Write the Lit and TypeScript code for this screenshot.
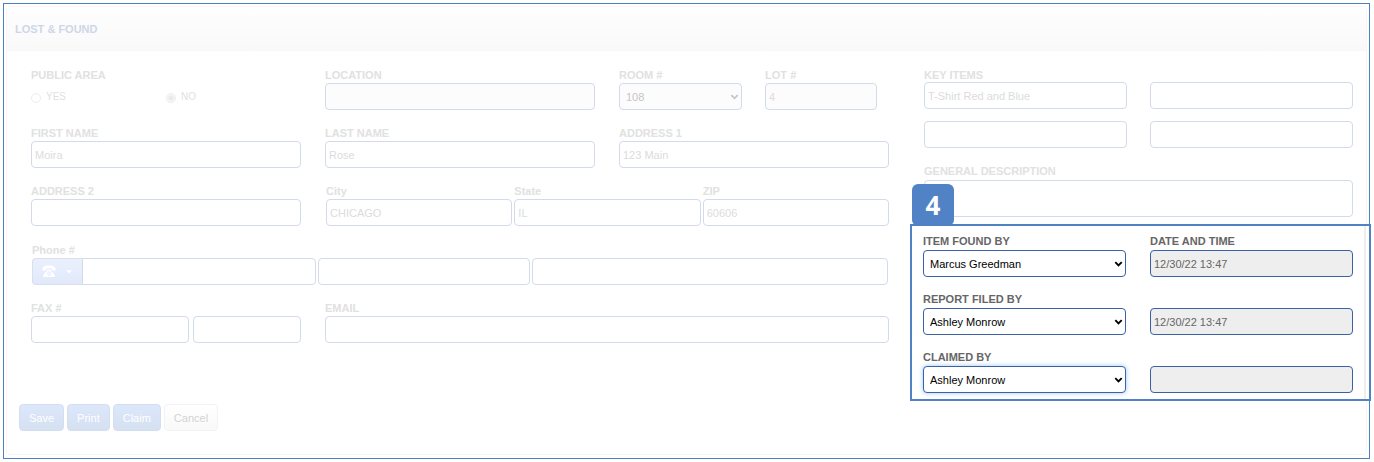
import { LitElement, html, css, nothing } from "lit";
import { customElement, property } from "lit/decorators.js";
import { classMap } from "lit/directives/class-map.js";

const controls = css`
  * { box-sizing: border-box; }
  .label {
    display: block;
    height: 14px;
    margin-bottom: 1px;
    font-size: 11px;
    font-weight: 700;
    line-height: 14px;
    color: #e1e1e1;
    white-space: nowrap;
  }
  .control {
    display: block;
    width: 100%;
    min-width: 0;
    height: 27px;
    margin: 0;
    padding: 0 3px;
    border: 1px solid #d3daea;
    border-radius: 4px;
    background-color: #fff;
    color: #dcdcdc;
    font-family: inherit;
    font-size: 11px;
    line-height: 16px;
    outline: none;
  }
  .control.shaded { background-color: #fcfcfc; }
  select.control {
    appearance: none;
    padding: 0 20px 0 6px;
    color: #c6c6c6;
    background-image: url("data:image/svg+xml,%3Csvg xmlns='http://www.w3.org/2000/svg' width='9' height='6'%3E%3Cpath d='M1.3 1.2l3.2 3.2 3.2-3.2' fill='none' stroke='%23c4c4c4' stroke-width='1.7'/%3E%3C/svg%3E");
    background-repeat: no-repeat;
    background-position: right 2px center;
  }
`;

@customElement("form-field")
class FormField extends LitElement {
  @property() label = "";
  @property() hint = "";
  @property() value = "";
  @property() kind = "text";
  @property({ type: Boolean }) shaded = false;
  @property({ type: Boolean }) active = false;
  @property({ type: Boolean }) glow = false;

  static styles = [
    controls,
    css`
      :host { display: block; min-width: 0; }
      .control.area { height: 37px; resize: none; }
      .label.active, .label.tall { margin-bottom: 2px; }
      .label.active { color: #666; }
      .control.active { border-color: #3a60a6; color: #666; }
      .control.active.shaded { background-color: #eee; }
      select.control.active {
        color: #000;
        background-image: url("data:image/svg+xml,%3Csvg xmlns='http://www.w3.org/2000/svg' width='9' height='6'%3E%3Cpath d='M1.3 1.2l3.2 3.2 3.2-3.2' fill='none' stroke='%23000' stroke-width='1.9'/%3E%3C/svg%3E");
      }
      .control.glow { box-shadow: 0 0 5px #9cc4f0; }
    `,
  ];

  render() {
    const area = this.kind === "area";
    const state = { active: this.active, shaded: this.shaded, glow: this.glow };
    const cls = classMap({ control: true, area, ...state });
    const aria = this.label ? nothing : this.hint;
    return html`
      ${this.label
        ? html`<label class=${classMap({ label: true, active: this.active, tall: area })} for="c">${this.label}</label>`
        : nothing}
      ${this.kind === "select"
        ? html`<select id="c" class=${cls} aria-label=${aria}><option>${this.value}</option></select>`
        : area
          ? html`<textarea id="c" class=${cls} aria-label=${aria}></textarea>`
          : html`<input id="c" type="text" class=${cls} aria-label=${aria} .value=${this.value} />`}
    `;
  }
}

@customElement("app-root")
class AppRoot extends LitElement {
  static styles = [
    controls,
    css`
      :host {
        display: block;
        padding: 3px 4px 3px 3px;
        background: #fff;
        font-family: "Liberation Sans", Arial, Helvetica, sans-serif;
      }
      .frame { padding: 2px 2px 3px; border: 1px solid #4b80c3; }
      .panel { border: 1px solid #f6f6f6; border-radius: 4px; }
      .head {
        display: flex;
        align-items: center;
        height: 44px;
        padding: 0 8px;
        border-bottom: 1px solid #f7f7f7;
        background: linear-gradient(#fefefe, #f9f9f9);
      }
      .title { margin: 0; font-size: 11px; line-height: 14px; color: #ced7e8; }
      .body {
        display: grid;
        grid-template-columns: 2fr 1fr;
        column-gap: 35px;
        align-items: start;
        padding: 17px 13px 0 24px;
      }
      .guest {
        display: grid;
        grid-template-columns: repeat(3, minmax(0, 1fr));
        gap: 16px 24px;
      }
      .wide { grid-column: span 2; }
      .full { grid-column: 1 / -1; }
      .radios { margin: 0; padding: 0; border: 0; }
      .radios .label { padding: 0; }
      .choices { display: grid; grid-template-columns: 1fr 1fr; padding-top: 7px; }
      .choice {
        display: flex;
        gap: 5px;
        font-size: 10px;
        line-height: 14px;
        color: #dfdfdf;
      }
      .radio {
        appearance: none;
        width: 10px;
        height: 10px;
        margin: 3px 0 0;
        border: 1px solid #ededed;
        border-radius: 50%;
        background: #fff;
      }
      .radio:checked { background: radial-gradient(circle, #ebebeb 2px, #fcfcfc 4px); }
      .room { display: grid; grid-template-columns: 11fr 10fr; gap: 23px; padding-right: 12px; }
      .place {
        display: grid;
        grid-template-columns: repeat(3, minmax(0, 1fr));
        gap: 2px;
        padding-left: 1px;
      }
      .phone { padding: 1px 1px 0; }
      .phone-row { display: grid; grid-template-columns: 284fr 213fr 356fr; gap: 2px; }
      .dial { display: flex; }
      .dial-button {
        display: flex;
        flex: none;
        align-items: center;
        gap: 10px;
        width: 50px;
        height: 27px;
        padding: 0 9px;
        border: 1px solid #d9dfec;
        border-right: 0;
        border-radius: 4px 0 0 4px;
        background: linear-gradient(#eaf0fd, #e1e9fa);
      }
      .dial .control { border-radius: 0 4px 4px 0; }
      .fax { display: grid; grid-template-columns: 158fr 108fr; gap: 4px; }
      .right .label { margin-bottom: 0; }
      .keys {
        display: grid;
        grid-template-columns: repeat(2, minmax(0, 1fr));
        align-items: end;
        gap: 12px 23px;
        margin-bottom: 16px;
      }
      .marked {
        position: relative;
        display: grid;
        grid-template-columns: repeat(2, minmax(0, 1fr));
        align-items: end;
        gap: 15px 24px;
        margin: 7px -18px 0 -14px;
        padding: 8px 16px 6px 11px;
        border: 2px solid #5182c6;
        background: linear-gradient(#eee, #eee) right 3px top / 2px 100% no-repeat #fff;
      }
      .badge {
        position: absolute;
        top: -42px;
        left: 0;
        width: 42px;
        height: 42px;
        border-radius: 6px;
        background: #5182c6;
        color: #fff;
        font-family: "Open Sans", sans-serif;
        font-size: 26px;
        font-weight: 700;
        line-height: 42px;
        text-align: center;
      }
      .actions { display: flex; gap: 3px; padding: 3px 12px 23px; }
      .button {
        height: 27px;
        padding: 0 9px;
        border: 1px solid #d3dff0;
        border-radius: 4px;
        background: linear-gradient(#dce7fb, #d5e0f1);
        color: #fff;
        font-family: inherit;
        font-size: 11px;
        line-height: 16px;
      }
      .button.plain {
        border-color: #f3f3f3;
        background: linear-gradient(#fff, #f9f9f9);
        color: #d3d3d3;
      }
    `,
  ];

  render() {
    return html`
      <main class="frame">
        <form class="panel" @submit=${(e: Event) => e.preventDefault()}>
          <header class="head"><h1 class="title">LOST &amp; FOUND</h1></header>
          <div class="body">
            <section class="guest">
              <fieldset class="radios">
                <legend class="label">PUBLIC AREA</legend>
                <div class="choices">
                  <label class="choice"><input class="radio" type="radio" name="public" />YES</label>
                  <label class="choice"><input class="radio" type="radio" name="public" checked />NO</label>
                </div>
              </fieldset>
              <form-field label="LOCATION" shaded></form-field>
              <div class="room">
                <form-field label="ROOM #" kind="select" value="108" shaded></form-field>
                <form-field label="LOT #" value="4" shaded></form-field>
              </div>
              <form-field label="FIRST NAME" value="Moira"></form-field>
              <form-field label="LAST NAME" value="Rose"></form-field>
              <form-field label="ADDRESS 1" value="123 Main"></form-field>
              <form-field label="ADDRESS 2"></form-field>
              <div class="place wide">
                <form-field label="City" value="CHICAGO"></form-field>
                <form-field label="State" value="IL"></form-field>
                <form-field label="ZIP" value="60606"></form-field>
              </div>
              <div class="phone full">
                <label class="label" for="phone">Phone #</label>
                <div class="phone-row">
                  <div class="dial">
                    <button class="dial-button" type="button" aria-label="Phone type">
                      <svg width="14" height="13" viewBox="0 0 14 13" fill="#fff">
                        <path d="M.3 4.7C.3 1.8 3 .6 7 .6s6.700 1.200 6.700 4.100c0 .6-.3.9-.9.900h-2c-.6 0-.9-.3-.9-.9v-.9C8.700 3.300 5.300 3.300 4.100 3.800v.9c0 .6-.3.9-.9.900h-2C.6 5.600.3 5.300.3 4.700z" />
                        <path fill-rule="evenodd" d="M5 4.800h4v1l3.200 3.400c.3.400.5.800.5 1.300v1.600H1.300v-1.600c0-.5.2-.9.500-1.300L5 5.800zM7 6.300a2.300 2.300 0 100 4.600 2.300 2.300 0 000-4.600z" />
                        <path d="M5.400 7.200h1v1h-1zM7.600 7.200h1v1h-1zM5.400 9h1v1h-1zM7.600 9h1v1h-1zM6.500 8.100h1v1h-1z" />
                      </svg>
                      <svg width="6" height="4" viewBox="0 0 6 4" fill="#fff"><path d="M0 .3h6L3 3.500z" /></svg>
                    </button>
                    <input id="phone" class="control" type="tel" />
                  </div>
                  <form-field hint="Phone, second part"></form-field>
                  <form-field hint="Phone, third part"></form-field>
                </div>
              </div>
              <div>
                <label class="label" for="fax">FAX #</label>
                <div class="fax">
                  <input id="fax" class="control" type="tel" />
                  <input class="control" type="tel" aria-label="Fax, second part" />
                </div>
              </div>
              <form-field class="wide" label="EMAIL"></form-field>
            </section>

            <section class="right">
              <label class="label" for="key">KEY ITEMS</label>
              <div class="keys">
                <input id="key" class="control" type="text" value="T-Shirt Red and Blue" />
                <form-field hint="Key item 2"></form-field>
                <form-field hint="Key item 3"></form-field>
                <form-field hint="Key item 4"></form-field>
              </div>
              <form-field label="GENERAL DESCRIPTION" kind="area"></form-field>
              <div class="marked">
                <span class="badge">4</span>
                <form-field active kind="select" label="ITEM FOUND BY" value="Marcus Greedman"></form-field>
                <form-field active shaded label="DATE AND TIME" value="12/30/22 13:47"></form-field>
                <form-field active kind="select" label="REPORT FILED BY" value="Ashley Monrow"></form-field>
                <form-field active shaded hint="Report date and time" value="12/30/22 13:47"></form-field>
                <form-field active glow kind="select" label="CLAIMED BY" value="Ashley Monrow"></form-field>
                <form-field active shaded hint="Claim date and time"></form-field>
              </div>
            </section>
          </div>
          <footer class="actions">
            <button class="button" type="submit">Save</button>
            <button class="button" type="button">Print</button>
            <button class="button" type="button">Claim</button>
            <button class="button plain" type="button">Cancel</button>
          </footer>
        </form>
      </main>
    `;
  }
}
